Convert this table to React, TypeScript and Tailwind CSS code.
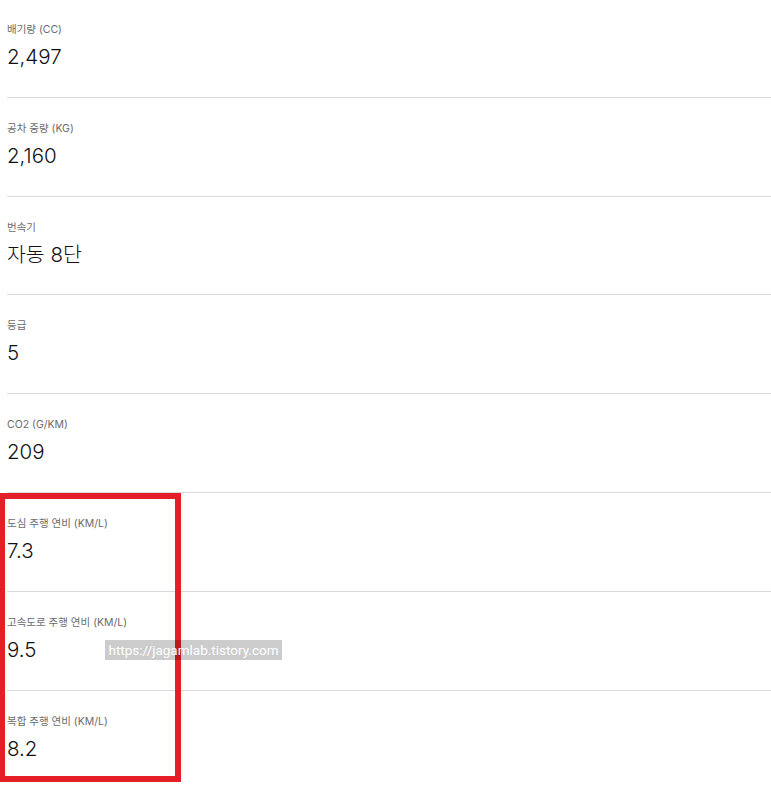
import React from "react";

const rows = [
  { label: "배기량 (CC)", value: "2,497" },
  { label: "공차 중량 (KG)", value: "2,160" },
  { label: "번속기", value: "자동 8단" },
  { label: "등급", value: "5" },
  { label: "CO2 (G/KM)", value: "209" },
  { label: "도심 주행 연비 (KM/L)", value: "7.3" },
  { label: "고속도로 주행 연비 (KM/L)", value: "9.5" },
  { label: "복합 주행 연비 (KM/L)", value: "8.2" },
];

export default function App() {
  return (
    <div
      className="relative w-[771px] h-[786px] overflow-hidden bg-white"
      style={{ fontFamily: 'Inter, "Noto Sans CJK KR", sans-serif' }}
    >
      <div className="pl-[7px] mt-[-1px]">
        {rows.map((r, i) => (
          <div
            key={i}
            className={`h-[98.83px] pt-[24px] ${i < rows.length - 1 ? "border-b border-[#d9d9d9]" : ""}`}
          >
            <div className="text-[10.5px] leading-[14px] text-[#6b6b6b]">{r.label}</div>
            <div className="mt-[6px] text-[20.5px] leading-[28px] font-light text-[#111]">{r.value}</div>
          </div>
        ))}
      </div>
      <div className="absolute left-[-1px] top-[493px] w-[182px] h-[289px] border-[6px] border-[#e61e28]" />
      <div
        className="absolute left-[105px] top-[640px] w-[177px] h-[20px] bg-[rgba(0,0,0,0.2)] text-white text-[13.5px] leading-[20px] text-center whitespace-nowrap overflow-hidden"
        style={{ fontFamily: 'Roboto, sans-serif' }}
      >
        https://jagamlab.tistory.com
      </div>
    </div>
  );
}
